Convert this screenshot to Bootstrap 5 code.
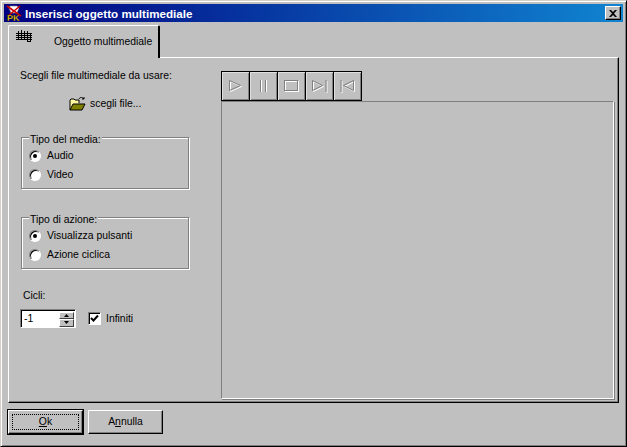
<!DOCTYPE html>
<html lang="it">
<head>
<meta charset="utf-8">
<title>Inserisci oggetto multimediale</title>
<link href="https://cdn.jsdelivr.net/npm/bootstrap@5.3.0/dist/css/bootstrap.min.css" rel="stylesheet">
<style>
html,body{margin:0;padding:0;background:#c0c0c0;overflow:hidden}
body{font:10.4px/13px "Liberation Sans",Arial,sans-serif;color:#000}
.win{width:627px;height:447px;background:#c0c0c0;border:1px solid;border-color:#d4d0c8 #000 #000 #d4d0c8;box-shadow:inset 1px 1px 0 #fff,inset -1px -1px 0 #808080;padding:3px}
.ttl{height:18px;background:linear-gradient(90deg,#000080,#1084d0);color:#fff;font-weight:700;font-size:11.65px;padding:0 2px;gap:3px}
.ttl-x{width:16px;height:14px;background:#c0c0c0;border:1px solid;border-color:#fff #000 #000 #fff;box-shadow:inset -1px -1px 0 #808080}
.tabstrip{height:33px;margin-left:4px;margin-top:3px;margin-bottom:-1px;position:relative;z-index:1}
.tabx{width:152px;height:33px;background:#c0c0c0;border-top:1px solid #fff;border-left:1px solid #fff;border-right:2px solid #000;border-radius:2px 2px 0 0;padding:4px 0 0 7px}
.tabx-t{margin-left:21px;padding-top:5px;white-space:nowrap}
.pane{height:346px;margin-left:4px;width:611px;border:1px solid;border-color:#fff #000 #000 #fff;box-shadow:inset -1px -1px 0 #808080;padding:11px 0 0 11px}
.leftc{width:201px;flex:none}
.grp{width:168px;height:52px;border:1px solid #808080;box-shadow:1px 1px 0 #fff,inset 1px 1px 0 #fff;position:relative;padding:8px 0 0 8px;margin:0 0 0 1px}
.grp-t{position:absolute;left:7px;top:-5px;background:#c0c0c0;padding:0 1px}
.optl{height:19px;gap:6px}
.rad{width:12px;height:12px;margin-left:-1px;border-radius:50%;background:#fff;border:1px solid;border-color:#808080 #fff #fff #808080;box-shadow:inset 1px 1px 0 #000;position:relative;flex:none}
.rad.on::after{content:"";position:absolute;left:3px;top:3px;width:4px;height:4px;border-radius:50%;background:#000}
.spinx{width:56px;height:19px;background:#fff;border:1px solid;border-color:#808080 #fff #fff #808080;box-shadow:inset 1px 1px 0 #000;padding-left:3px}
.spin-b{width:15px;height:15px;margin:1px 1px 0 auto;display:flex;flex-direction:column}
.spin-b i{flex:1;background:#c0c0c0;border:1px solid;border-color:#fff #404040 #404040 #fff;display:flex;align-items:center;justify-content:center}
.chk{width:13px;height:13px;background:#fff;border:1px solid;border-color:#808080 #fff #fff #808080;box-shadow:inset 1px 1px 0 #000;flex:none;display:flex;align-items:center;justify-content:center}
.rightc{width:393px;flex:none;margin-top:2px}
.pbar{height:30px}
.pbtn{width:29px;height:30px;margin-right:-1px;border:1px solid #000;background:#c0c0c0;box-shadow:inset 1px 1px 0 #dfdfdf,inset -1px -1px 0 #808080;display:flex;align-items:center;justify-content:center;padding:0}
.vid{height:298px;width:393px;border:1px solid;border-color:#808080 #fff #fff #808080;box-shadow:1px 1px 0 #808080}
.foot{margin:7px 0 0 4px;gap:5px}
.wbtn{width:75px;height:24px;background:#c0c0c0;border:1px solid;border-color:#fff #000 #000 #fff;box-shadow:inset -1px -1px 0 #808080;color:#000;font-size:10.4px;padding:0 0 2px;display:flex;align-items:center;justify-content:center;border-radius:0}
.wbtn.dft{outline:1px solid #000;position:relative}
.wbtn.dft::after{content:"";position:absolute;inset:3px;border:1px dotted #000}
.lbl-s{margin:0}
</style>
</head>
<body>
<div class="win d-flex flex-column">
  <div class="ttl d-flex align-items-center">
    <svg width="16" height="16" viewBox="0 0 16 16"><path d="M4 1h7l2 2-2 5H5L3 3z" fill="#fff" stroke="#808080" stroke-width=".6"/><path d="M1 1l14 10M14 1L2 11" stroke="#d00000" stroke-width="1.6"/><text x="1" y="15.500" font-family="Liberation Sans" font-size="9" font-weight="700" fill="#ffd800" stroke="#000" stroke-width=".3">PK</text></svg>
    <span class="flex-grow-1">Inserisci oggetto multimediale</span>
    <span class="ttl-x d-flex align-items-center justify-content-center"><svg width="8" height="7" viewBox="0 0 8 7"><path d="M0 0h2l2 2 2-2h2L5 3.500 8 7H6L4 5 2 7H0l3-3.500z" fill="#000"/></svg></span>
  </div>
  <div class="tabstrip">
    <div class="tabx d-flex">
      <svg width="17" height="13" viewBox="0 0 17 13" class="flex-none"><path d="M0 3.500h16M0 5.500h16M0 7.500h16M0 9.500h16" stroke="#000" fill="none"/><path d="M2.500 1v9M5.500 0v10M8.500 1v9M11.500 1v10M14.500 3v8M11 11.500h4" stroke="#000" fill="none"/></svg>
      <div class="tabx-t">Oggetto multimediale</div>
    </div>
  </div>
  <div class="pane d-flex">
    <div class="leftc">
      <p class="lbl-s">Scegli file multimediale da usare:</p>
      <div class="d-flex align-items-center" style="margin:13px 0 0 49px;gap:4px;height:17px">
        <svg width="17" height="15" viewBox="0 0 17 15"><path d="M1 14V4l1-1h3l1 1h4v3" fill="#fff8a0" stroke="#000"/><path d="M1 14l3-6h12l-3 6z" fill="#808000" stroke="#000"/><path d="M10 3c1-2 3-2 5 0M15 3h-2M15 3V1" stroke="#000" fill="none"/></svg>
        <span>scegli file...</span>
      </div>
      <div class="grp" style="margin-top:25px">
        <span class="grp-t">Tipo del media:</span>
        <div class="optl d-flex align-items-center"><span class="rad on"></span><span>Audio</span></div>
        <div class="optl d-flex align-items-center"><span class="rad"></span><span>Video</span></div>
      </div>
      <div class="grp" style="margin-top:28px">
        <span class="grp-t">Tipo di azione:</span>
        <div class="optl d-flex align-items-center"><span class="rad on"></span><span>Visualizza pulsanti</span></div>
        <div class="optl d-flex align-items-center"><span class="rad"></span><span>Azione ciclica</span></div>
      </div>
      <p class="lbl-s" style="margin:20px 0 0 3px">Cicli:</p>
      <div class="d-flex align-items-center" style="margin-top:7px;gap:12px">
        <div class="spinx d-flex align-items-center"><span>-1</span>
          <div class="spin-b"><i><svg width="5" height="3"><path d="M2.500 0L5 3H0z"/></svg></i><i><svg width="5" height="3"><path d="M0 0h5L2.500 3z"/></svg></i></div>
        </div>
        <div class="d-flex align-items-center" style="gap:5px">
          <span class="chk"><svg width="9" height="9" viewBox="0 0 9 9"><path d="M1 4l2.500 2.500L8 1.500" stroke="#000" stroke-width="2" fill="none"/></svg></span>
          <span>Infiniti</span>
        </div>
      </div>
    </div>
    <div class="rightc">
      <div class="pbar d-flex">
        <button class="pbtn" type="button" aria-label="play"><svg width="16" height="14" viewBox="0 0 16 14"><path d="M2.500 2.500l11 5-11 5z" fill="none" stroke="#fff"/><path d="M1.500 1.500l11 5-11 5z" fill="none" stroke="#808080"/></svg></button>
        <button class="pbtn" type="button" aria-label="pausa"><svg width="10" height="14" viewBox="0 0 10 14"><path d="M2.500 1v12M7.500 1v12" stroke="#fff" stroke-width="1"/><path d="M1.500 1v12M6.500 1v12" stroke="#808080" stroke-width="1"/></svg></button>
        <button class="pbtn" type="button" aria-label="stop"><svg width="15" height="12" viewBox="0 0 15 12"><rect x="1.500" y="1.500" width="13" height="10" fill="none" stroke="#fff"/><rect x=".5" y=".5" width="13" height="10" fill="none" stroke="#808080"/></svg></button>
        <button class="pbtn" type="button" aria-label="avanti"><svg width="17" height="14" viewBox="0 0 17 14"><path d="M2.500 2.500l10 5-10 5zM16 2v12" fill="none" stroke="#fff"/><path d="M1.500 1.500l10 5-10 5zM15 1v12" fill="none" stroke="#808080"/></svg></button>
        <button class="pbtn" type="button" aria-label="inizio"><svg width="17" height="14" viewBox="0 0 17 14"><path d="M15.500 2.500l-10 5 10 5zM3 2v12" fill="none" stroke="#fff"/><path d="M14.500 1.500l-10 5 10 5zM2 1v12" fill="none" stroke="#808080"/></svg></button>
      </div>
      <div class="vid"></div>
    </div>
  </div>
  <div class="foot d-flex">
    <button class="wbtn dft" type="button"><span><u>O</u>k</span></button>
    <button class="wbtn" type="button"><span>A<u>n</u>nulla</span></button>
  </div>
</div>
<script src="https://cdn.jsdelivr.net/npm/bootstrap@5.3.0/dist/js/bootstrap.bundle.min.js"></script>
</body>
</html>
